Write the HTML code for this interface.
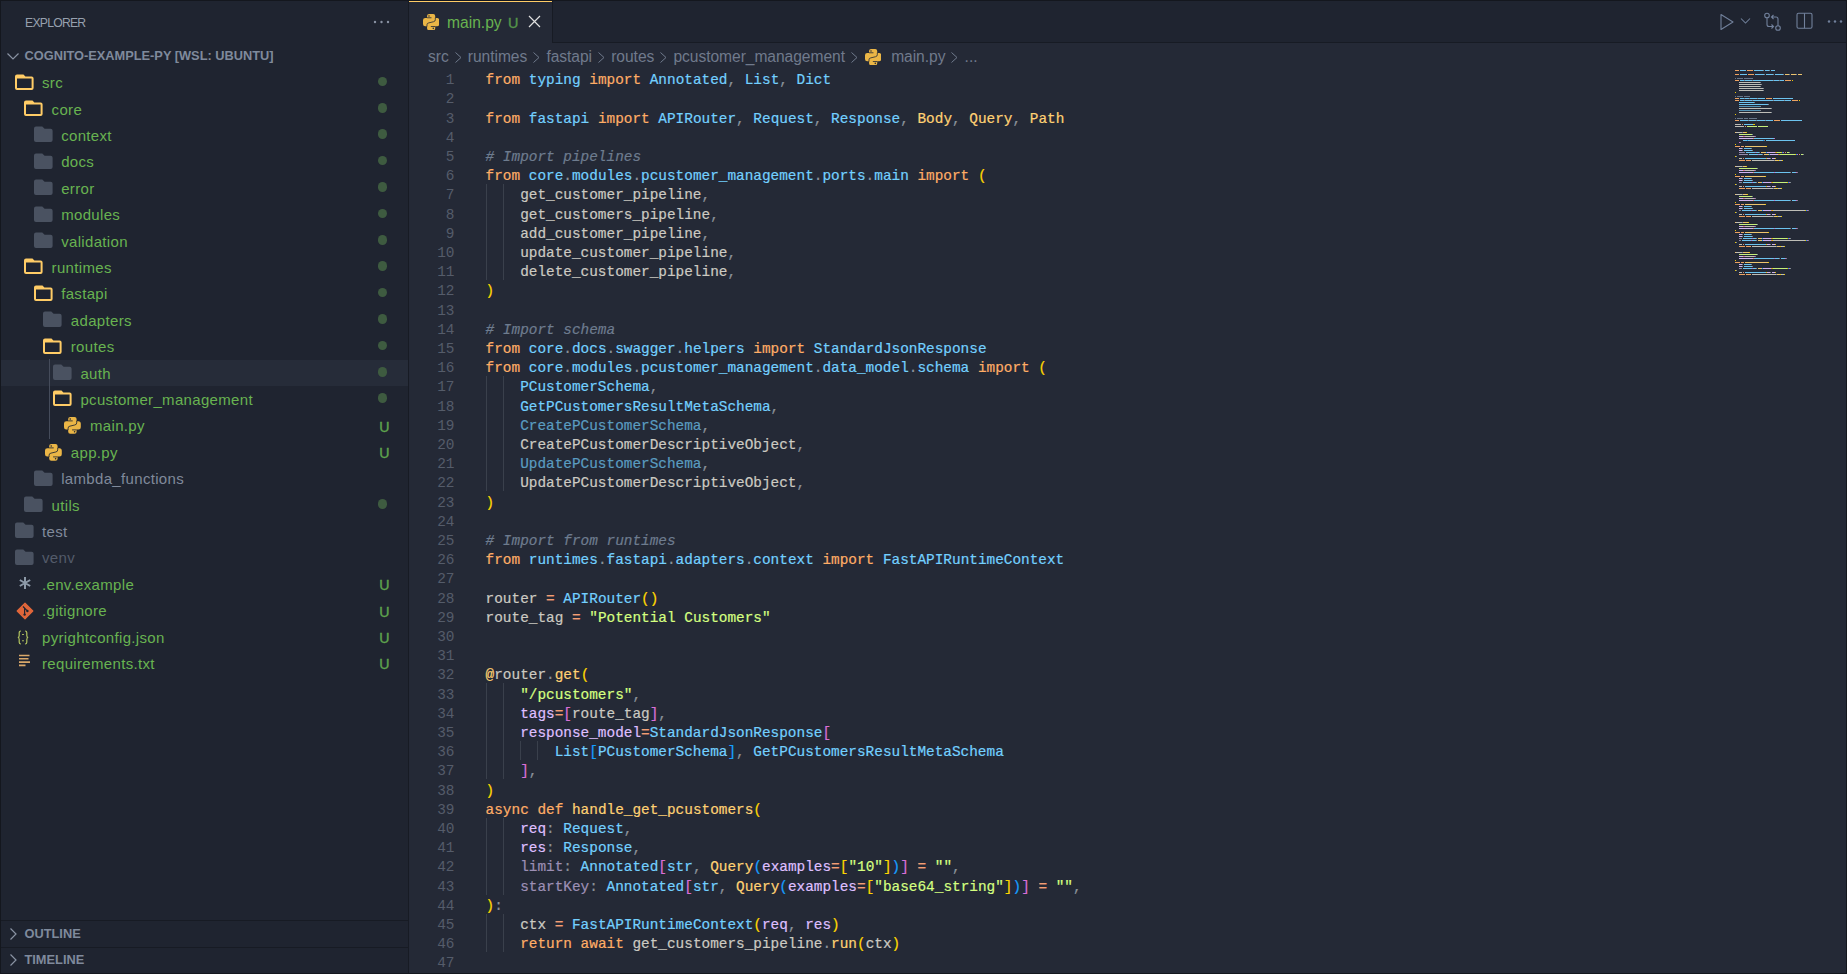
<!DOCTYPE html><html><head><meta charset="utf-8"><style>

*{box-sizing:border-box;margin:0;padding:0}
html,body{width:1847px;height:974px;overflow:hidden;background:#242936}
body{position:relative;font-family:"Liberation Sans",sans-serif}
.a{position:absolute}
#sb{left:0;top:0;width:408px;height:974px;background:#1f2430}
#sbb{left:408px;top:0;width:1px;height:974px;background:#171b24}
.ttl{left:25px;top:14px;font-size:12.2px;letter-spacing:-0.75px;color:#97a0ae;line-height:18px}
.row{left:0;width:408px;height:26.4px}
.nm{position:absolute;font-size:15px;letter-spacing:0.33px;line-height:26.4px;top:0.9px;white-space:pre}
.dt{position:absolute;left:377.8px;width:9.6px;height:9.6px;border-radius:50%;background:#3e5b40;top:7.2px}
.U{position:absolute;left:379.2px;top:1.2px;font-size:14.2px;-webkit-text-stroke:0.35px #5fa64e;line-height:26.4px;color:#5fa64e}
.ic{position:absolute;top:0}
.hdr{font-weight:bold;font-size:12.8px;letter-spacing:0px;color:#7f8a9c;white-space:pre}
.code{left:485.6px;-webkit-text-stroke:0.2px currentColor;font-family:"Liberation Mono",monospace;font-size:14.4px;line-height:19.2px;height:19.2px;white-space:pre;color:#cccac2}
.ln{left:420px;width:34.5px;text-align:right;font-family:"Liberation Mono",monospace;font-size:14.4px;line-height:19.2px;height:19.2px;color:#555c6a}
.ig{width:1px;background:#3a404c}
.k{color:#ffad66}.n{color:#73d0ff}.c{color:#73d0ff}.f{color:#ffd173}.v{color:#cccac2}.p{color:#dfbfff}.pu{color:#9d8fb5}
.u{color:#5a9cc0}.o{color:#f29e74}.d{color:#8a9199}.s{color:#d5ff80}.cm{color:#6e7c8f;font-style:italic}
.b1{color:#ffd700}.b2{color:#da70d6}.b3{color:#179fff}.dc{color:#ffd173}
.bc{top:43.5px;left:428px;letter-spacing:-0.05px;height:26.4px;line-height:26.4px;font-size:15.6px;color:#707a8c;white-space:pre;display:flex;align-items:center}
.chev{display:inline-block;width:19.2px;height:26.4px;position:relative}
.mm{height:1.15px;opacity:.92}

</style></head><body>
<div class="a" id="sb"></div>
<div class="a" id="sbb"></div>
<div class="a ttl">EXPLORER</div>
<svg class="a" style="left:372px;top:16.8px" width="20" height="10" viewBox="0 0 20 10"><circle cx="3" cy="5" r="1.2" fill="#8a93a3"/><circle cx="9.5" cy="5" r="1.2" fill="#8a93a3"/><circle cx="16" cy="5" r="1.2" fill="#8a93a3"/></svg>
<svg class="a" style="left:6px;top:49px" width="14" height="14" viewBox="0 0 14 14"><path d="M1.5 4.5 L7 10 L12.5 4.5" fill="none" stroke="#8a93a3" stroke-width="1.2"/></svg>
<div class="a hdr" style="left:24.5px;top:42.6px;line-height:26.4px">COGNITO-EXAMPLE-PY [WSL: UBUNTU]</div>
<svg class="a" style="left:13.6px;top:73.6px" width="20" height="17" viewBox="0 0 20 17"><path d="M1 2.4 Q1 0.4 3 0.4 H9.5 L11.4 2.4 H17.6 Q19.6 2.4 19.6 4.4 V14 Q19.6 16 17.6 16 H3 Q1 16 1 14 Z M3 4.6 V14 H17.6 V4.6 Z" fill="#ffcc66" fill-rule="evenodd"/></svg>
<div class="a row" style="top:69.4px"><span class="nm" style="left:42.0px;color:#68b350">src</span>
<span class="dt"></span>
</div>
<svg class="a" style="left:23.2px;top:100.0px" width="20" height="17" viewBox="0 0 20 17"><path d="M1 2.4 Q1 0.4 3 0.4 H9.5 L11.4 2.4 H17.6 Q19.6 2.4 19.6 4.4 V14 Q19.6 16 17.6 16 H3 Q1 16 1 14 Z M3 4.6 V14 H17.6 V4.6 Z" fill="#ffcc66" fill-rule="evenodd"/></svg>
<div class="a row" style="top:95.8px"><span class="nm" style="left:51.6px;color:#68b350">core</span>
<span class="dt"></span>
</div>
<svg class="a" style="left:32.8px;top:126.4px" width="20" height="17" viewBox="0 0 20 17"><path d="M1 2.4 Q1 0.4 3 0.4 H9.3 L11.6 2.8 H17.6 Q19.6 2.8 19.6 4.8 V14 Q19.6 16 17.6 16 H3 Q1 16 1 14 Z" fill="#4a5261"/></svg>
<div class="a row" style="top:122.2px"><span class="nm" style="left:61.2px;color:#68b350">context</span>
<span class="dt"></span>
</div>
<svg class="a" style="left:32.8px;top:152.8px" width="20" height="17" viewBox="0 0 20 17"><path d="M1 2.4 Q1 0.4 3 0.4 H9.3 L11.6 2.8 H17.6 Q19.6 2.8 19.6 4.8 V14 Q19.6 16 17.6 16 H3 Q1 16 1 14 Z" fill="#4a5261"/></svg>
<div class="a row" style="top:148.6px"><span class="nm" style="left:61.2px;color:#68b350">docs</span>
<span class="dt"></span>
</div>
<svg class="a" style="left:32.8px;top:179.2px" width="20" height="17" viewBox="0 0 20 17"><path d="M1 2.4 Q1 0.4 3 0.4 H9.3 L11.6 2.8 H17.6 Q19.6 2.8 19.6 4.8 V14 Q19.6 16 17.6 16 H3 Q1 16 1 14 Z" fill="#4a5261"/></svg>
<div class="a row" style="top:175.0px"><span class="nm" style="left:61.2px;color:#68b350">error</span>
<span class="dt"></span>
</div>
<svg class="a" style="left:32.8px;top:205.6px" width="20" height="17" viewBox="0 0 20 17"><path d="M1 2.4 Q1 0.4 3 0.4 H9.3 L11.6 2.8 H17.6 Q19.6 2.8 19.6 4.8 V14 Q19.6 16 17.6 16 H3 Q1 16 1 14 Z" fill="#4a5261"/></svg>
<div class="a row" style="top:201.4px"><span class="nm" style="left:61.2px;color:#68b350">modules</span>
<span class="dt"></span>
</div>
<svg class="a" style="left:32.8px;top:232.0px" width="20" height="17" viewBox="0 0 20 17"><path d="M1 2.4 Q1 0.4 3 0.4 H9.3 L11.6 2.8 H17.6 Q19.6 2.8 19.6 4.8 V14 Q19.6 16 17.6 16 H3 Q1 16 1 14 Z" fill="#4a5261"/></svg>
<div class="a row" style="top:227.8px"><span class="nm" style="left:61.2px;color:#68b350">validation</span>
<span class="dt"></span>
</div>
<svg class="a" style="left:23.2px;top:258.4px" width="20" height="17" viewBox="0 0 20 17"><path d="M1 2.4 Q1 0.4 3 0.4 H9.5 L11.4 2.4 H17.6 Q19.6 2.4 19.6 4.4 V14 Q19.6 16 17.6 16 H3 Q1 16 1 14 Z M3 4.6 V14 H17.6 V4.6 Z" fill="#ffcc66" fill-rule="evenodd"/></svg>
<div class="a row" style="top:254.2px"><span class="nm" style="left:51.6px;color:#68b350">runtimes</span>
<span class="dt"></span>
</div>
<svg class="a" style="left:32.8px;top:284.8px" width="20" height="17" viewBox="0 0 20 17"><path d="M1 2.4 Q1 0.4 3 0.4 H9.5 L11.4 2.4 H17.6 Q19.6 2.4 19.6 4.4 V14 Q19.6 16 17.6 16 H3 Q1 16 1 14 Z M3 4.6 V14 H17.6 V4.6 Z" fill="#ffcc66" fill-rule="evenodd"/></svg>
<div class="a row" style="top:280.6px"><span class="nm" style="left:61.2px;color:#68b350">fastapi</span>
<span class="dt"></span>
</div>
<svg class="a" style="left:42.4px;top:311.2px" width="20" height="17" viewBox="0 0 20 17"><path d="M1 2.4 Q1 0.4 3 0.4 H9.3 L11.6 2.8 H17.6 Q19.6 2.8 19.6 4.8 V14 Q19.6 16 17.6 16 H3 Q1 16 1 14 Z" fill="#4a5261"/></svg>
<div class="a row" style="top:307.0px"><span class="nm" style="left:70.8px;color:#68b350">adapters</span>
<span class="dt"></span>
</div>
<svg class="a" style="left:42.4px;top:337.6px" width="20" height="17" viewBox="0 0 20 17"><path d="M1 2.4 Q1 0.4 3 0.4 H9.5 L11.4 2.4 H17.6 Q19.6 2.4 19.6 4.4 V14 Q19.6 16 17.6 16 H3 Q1 16 1 14 Z M3 4.6 V14 H17.6 V4.6 Z" fill="#ffcc66" fill-rule="evenodd"/></svg>
<div class="a row" style="top:333.4px"><span class="nm" style="left:70.8px;color:#68b350">routes</span>
<span class="dt"></span>
</div>
<div class="a" style="left:1px;top:359.8px;width:407px;height:26.4px;background:#262c39"></div>
<svg class="a" style="left:52.0px;top:364.0px" width="20" height="17" viewBox="0 0 20 17"><path d="M1 2.4 Q1 0.4 3 0.4 H9.3 L11.6 2.8 H17.6 Q19.6 2.8 19.6 4.8 V14 Q19.6 16 17.6 16 H3 Q1 16 1 14 Z" fill="#4a5261"/></svg>
<div class="a row" style="top:359.8px"><span class="nm" style="left:80.4px;color:#68b350">auth</span>
<span class="dt"></span>
</div>
<svg class="a" style="left:52.0px;top:390.4px" width="20" height="17" viewBox="0 0 20 17"><path d="M1 2.4 Q1 0.4 3 0.4 H9.5 L11.4 2.4 H17.6 Q19.6 2.4 19.6 4.4 V14 Q19.6 16 17.6 16 H3 Q1 16 1 14 Z M3 4.6 V14 H17.6 V4.6 Z" fill="#ffcc66" fill-rule="evenodd"/></svg>
<div class="a row" style="top:386.2px"><span class="nm" style="left:80.4px;color:#68b350">pcustomer_management</span>
<span class="dt"></span>
</div>
<svg class="a" style="left:64.2px;top:417.4px" width="16.8" height="16.8" viewBox="0 0 16 16"><path d="M6 0 H10 Q12 0 12 2 V4 H13.8 Q16 4 16 6.5 V9.8 Q16 12 13.8 12 H12 V14 Q12 16 10 16 H6 Q4 16 4 14 V12 H2.2 Q0 12 0 9.8 V6.2 Q0 4 2.2 4 H4 V2 Q4 0 6 0 Z" fill="#ebb646"/><path d="M3.9 12.3 V10.6 Q3.9 8.9 5.7 8.7 L10.3 7.6 Q12.1 7.3 12.1 5.6 V3.7 M4 3.7 H8.3 M7.7 12.3 H12" fill="none" stroke="#1f2430" stroke-width="0.8"/><circle cx="5.9" cy="1.9" r="0.75" fill="#1f2430"/><circle cx="10.1" cy="14.1" r="0.75" fill="#1f2430"/></svg>
<div class="a row" style="top:412.6px"><span class="nm" style="left:90.0px;color:#68b350">main.py</span>
<span class="U">U</span>
</div>
<svg class="a" style="left:45.0px;top:443.8px" width="16.8" height="16.8" viewBox="0 0 16 16"><path d="M6 0 H10 Q12 0 12 2 V4 H13.8 Q16 4 16 6.5 V9.8 Q16 12 13.8 12 H12 V14 Q12 16 10 16 H6 Q4 16 4 14 V12 H2.2 Q0 12 0 9.8 V6.2 Q0 4 2.2 4 H4 V2 Q4 0 6 0 Z" fill="#ebb646"/><path d="M3.9 12.3 V10.6 Q3.9 8.9 5.7 8.7 L10.3 7.6 Q12.1 7.3 12.1 5.6 V3.7 M4 3.7 H8.3 M7.7 12.3 H12" fill="none" stroke="#1f2430" stroke-width="0.8"/><circle cx="5.9" cy="1.9" r="0.75" fill="#1f2430"/><circle cx="10.1" cy="14.1" r="0.75" fill="#1f2430"/></svg>
<div class="a row" style="top:439.0px"><span class="nm" style="left:70.8px;color:#68b350">app.py</span>
<span class="U">U</span>
</div>
<svg class="a" style="left:32.8px;top:469.6px" width="20" height="17" viewBox="0 0 20 17"><path d="M1 2.4 Q1 0.4 3 0.4 H9.3 L11.6 2.8 H17.6 Q19.6 2.8 19.6 4.8 V14 Q19.6 16 17.6 16 H3 Q1 16 1 14 Z" fill="#4a5261"/></svg>
<div class="a row" style="top:465.4px"><span class="nm" style="left:61.2px;color:#808a9b">lambda_functions</span>
</div>
<svg class="a" style="left:23.2px;top:496.0px" width="20" height="17" viewBox="0 0 20 17"><path d="M1 2.4 Q1 0.4 3 0.4 H9.3 L11.6 2.8 H17.6 Q19.6 2.8 19.6 4.8 V14 Q19.6 16 17.6 16 H3 Q1 16 1 14 Z" fill="#4a5261"/></svg>
<div class="a row" style="top:491.8px"><span class="nm" style="left:51.6px;color:#68b350">utils</span>
<span class="dt"></span>
</div>
<svg class="a" style="left:13.6px;top:522.4px" width="20" height="17" viewBox="0 0 20 17"><path d="M1 2.4 Q1 0.4 3 0.4 H9.3 L11.6 2.8 H17.6 Q19.6 2.8 19.6 4.8 V14 Q19.6 16 17.6 16 H3 Q1 16 1 14 Z" fill="#4a5261"/></svg>
<div class="a row" style="top:518.2px"><span class="nm" style="left:42.0px;color:#808a9b">test</span>
</div>
<svg class="a" style="left:13.6px;top:548.8px" width="20" height="17" viewBox="0 0 20 17"><path d="M1 2.4 Q1 0.4 3 0.4 H9.3 L11.6 2.8 H17.6 Q19.6 2.8 19.6 4.8 V14 Q19.6 16 17.6 16 H3 Q1 16 1 14 Z" fill="#4a5261"/></svg>
<div class="a row" style="top:544.6px"><span class="nm" style="left:42.0px;color:#535b6a">venv</span>
</div>
<svg class="a" style="left:17.6px;top:576.0px" width="14" height="14" viewBox="0 0 14 14"><path d="M7 1 V13 M1.8 4 L12.2 10 M1.8 10 L12.2 4" stroke="#8d9aa8" stroke-width="2"/></svg>
<div class="a row" style="top:571.0px"><span class="nm" style="left:42.0px;color:#68b350">.env.example</span>
<span class="U">U</span>
</div>
<svg class="a" style="left:15.8px;top:601.8px" width="18" height="18" viewBox="0 0 18 18"><path d="M9 1.2 L16.8 9 L9 16.8 L1.2 9 Z" fill="#e0663a" stroke="#e0663a" stroke-width="1.2" stroke-linejoin="round"/><path d="M7 4.5 L11.3 8.8 M8.6 6.1 V12.5" stroke="#1f2430" stroke-width="1.2" fill="none"/><circle cx="8.6" cy="12.6" r="1.2" fill="#1f2430"/><circle cx="11.4" cy="9" r="1.2" fill="#1f2430"/></svg>
<div class="a row" style="top:597.4px"><span class="nm" style="left:42.0px;color:#68b350">.gitignore</span>
<span class="U">U</span>
</div>
<svg class="a" style="left:17.2px;top:630.2px" width="12" height="15" viewBox="0 0 12 15"><path d="M4 1 Q2.2 1 2.2 2.8 V5.6 Q2.2 7.5 0.8 7.5 Q2.2 7.5 2.2 9.4 V12.2 Q2.2 14 4 14 M8 1 Q9.8 1 9.8 2.8 V5.6 Q9.8 7.5 11.2 7.5 Q9.8 7.5 9.8 9.4 V12.2 Q9.8 14 8 14" fill="none" stroke="#b2c460" stroke-width="1.2"/><path d="M5 4.5 H7 M5 10.5 Q6 11.6 7 10.5" fill="none" stroke="#b2c460" stroke-width="0.9"/></svg>
<div class="a row" style="top:623.8px"><span class="nm" style="left:42.0px;color:#68b350">pyrightconfig.json</span>
<span class="U">U</span>
</div>
<svg class="a" style="left:17.8px;top:654.4px" width="14" height="14" viewBox="0 0 14 14"><path d="M1 1.5 H11.5 M1 4.8 H10.5 M1 8.1 H12 M1 11.4 H7.5" stroke="#d9a86a" stroke-width="1.6"/></svg>
<div class="a row" style="top:650.2px"><span class="nm" style="left:42.0px;color:#68b350">requirements.txt</span>
<span class="U">U</span>
</div>
<div class="a" style="left:49px;top:359.2px;width:1px;height:79.4px;background:#454c5b"></div>
<div class="a" style="left:1px;top:920px;width:407px;height:1px;background:#171b24"></div>
<div class="a" style="left:1px;top:946.6px;width:407px;height:1px;background:#171b24"></div>
<svg class="a" style="left:6px;top:926.6px" width="14" height="14" viewBox="0 0 14 14"><path d="M4.5 1.5 L10 7 L4.5 12.5" fill="none" stroke="#8a93a3" stroke-width="1.2"/></svg>
<div class="a hdr" style="left:24.5px;top:920.6px;line-height:26.4px">OUTLINE</div>
<svg class="a" style="left:6px;top:953.0px" width="14" height="14" viewBox="0 0 14 14"><path d="M4.5 1.5 L10 7 L4.5 12.5" fill="none" stroke="#8a93a3" stroke-width="1.2"/></svg>
<div class="a hdr" style="left:24.5px;top:947.0px;line-height:26.4px">TIMELINE</div>
<div class="a" style="left:409px;top:0;width:1438px;height:42px;background:#1f2430"></div>
<div class="a" style="left:552px;top:41.5px;width:1295px;height:1px;background:#171b24"></div>
<div class="a" style="left:409px;top:1px;width:143px;height:41.5px;background:#242936"></div>
<div class="a" style="left:409px;top:1px;width:143px;height:1.2px;background:#ffcc66"></div>
<div class="a" style="left:552px;top:1px;width:1px;height:41px;background:#171b24"></div>
<svg class="a" style="left:422.8px;top:13.7px" width="16.3" height="16.3" viewBox="0 0 16 16"><path d="M6 0 H10 Q12 0 12 2 V4 H13.8 Q16 4 16 6.5 V9.8 Q16 12 13.8 12 H12 V14 Q12 16 10 16 H6 Q4 16 4 14 V12 H2.2 Q0 12 0 9.8 V6.2 Q0 4 2.2 4 H4 V2 Q4 0 6 0 Z" fill="#ebb646"/><path d="M3.9 12.3 V10.6 Q3.9 8.9 5.7 8.7 L10.3 7.6 Q12.1 7.3 12.1 5.6 V3.7 M4 3.7 H8.3 M7.7 12.3 H12" fill="none" stroke="#242936" stroke-width="0.8"/><circle cx="5.9" cy="1.9" r="0.75" fill="#242936"/><circle cx="10.1" cy="14.1" r="0.75" fill="#242936"/></svg>
<div class="a" style="left:447px;top:10px;font-size:15.6px;line-height:26px;color:#68b350">main.py</div>
<div class="a" style="left:508px;top:10.2px;font-size:14.4px;-webkit-text-stroke:0.35px #55964a;line-height:26px;color:#55964a">U</div>
<svg class="a" style="left:528px;top:15px" width="13" height="13" viewBox="0 0 13 13"><path d="M1 1 L12 12 M12 1 L1 12" stroke="#e0e0e0" stroke-width="1.2"/></svg>
<svg class="a" style="left:1718px;top:12px" width="18" height="20" viewBox="0 0 18 20"><path d="M3 2.5 L15 10 L3 17.5 Z" fill="none" stroke="#71809b" stroke-width="1.1" stroke-linejoin="round"/></svg>
<svg class="a" style="left:1740px;top:17px" width="12" height="9" viewBox="0 0 12 9"><path d="M1 1.5 L5.5 6 L10 1.5" fill="none" stroke="#71809b" stroke-width="1.05"/></svg>
<svg class="a" style="left:1763px;top:12px" width="20" height="20" viewBox="0 0 20 20"><circle cx="4" cy="3.5" r="2.3" fill="none" stroke="#71809b" stroke-width="1.1"/><circle cx="15" cy="16" r="2.3" fill="none" stroke="#71809b" stroke-width="1.1"/><path d="M4 5.8 V12.5 Q4 14.5 6 14.5 H10.5 M8.5 12.5 L10.5 14.5 L8.5 16.5 M15 13.7 V7 Q15 5 13 5 H8.5 M10.5 3 L8.5 5 L10.5 7" fill="none" stroke="#71809b" stroke-width="1.1"/></svg>
<svg class="a" style="left:1796px;top:12px" width="18" height="18" viewBox="0 0 18 18"><rect x="1" y="1.2" width="15" height="15" rx="1.5" fill="none" stroke="#71809b" stroke-width="1.1"/><path d="M8.5 1.2 V16.2" stroke="#71809b" stroke-width="1.1"/></svg>
<svg class="a" style="left:1826px;top:16px" width="20" height="10" viewBox="0 0 20 10"><circle cx="3" cy="5.5" r="1.2" fill="#71809b"/><circle cx="9" cy="5.5" r="1.2" fill="#71809b"/><circle cx="15" cy="5.5" r="1.2" fill="#71809b"/></svg>
<div class="a bc"><span>src</span><span class="chev"><svg style="position:absolute;left:5px;top:8px" width="9" height="11" viewBox="0 0 9 11"><path d="M1.5 0.5 L7 5.5 L1.5 10.5" fill="none" stroke="#707a8c" stroke-width="1"/></svg></span><span>runtimes</span><span class="chev"><svg style="position:absolute;left:5px;top:8px" width="9" height="11" viewBox="0 0 9 11"><path d="M1.5 0.5 L7 5.5 L1.5 10.5" fill="none" stroke="#707a8c" stroke-width="1"/></svg></span><span>fastapi</span><span class="chev"><svg style="position:absolute;left:5px;top:8px" width="9" height="11" viewBox="0 0 9 11"><path d="M1.5 0.5 L7 5.5 L1.5 10.5" fill="none" stroke="#707a8c" stroke-width="1"/></svg></span><span>routes</span><span class="chev"><svg style="position:absolute;left:5px;top:8px" width="9" height="11" viewBox="0 0 9 11"><path d="M1.5 0.5 L7 5.5 L1.5 10.5" fill="none" stroke="#707a8c" stroke-width="1"/></svg></span><span>pcustomer_management</span><span class="chev"><svg style="position:absolute;left:5px;top:8px" width="9" height="11" viewBox="0 0 9 11"><path d="M1.5 0.5 L7 5.5 L1.5 10.5" fill="none" stroke="#707a8c" stroke-width="1"/></svg></span><span style="display:inline-block;width:27px;height:26.4px;position:relative"><svg class="a" style="position:absolute;left:0.5px;top:5.2px" width="16.3" height="16.3" viewBox="0 0 16 16"><path d="M6 0 H10 Q12 0 12 2 V4 H13.8 Q16 4 16 6.5 V9.8 Q16 12 13.8 12 H12 V14 Q12 16 10 16 H6 Q4 16 4 14 V12 H2.2 Q0 12 0 9.8 V6.2 Q0 4 2.2 4 H4 V2 Q4 0 6 0 Z" fill="#ebb646"/><path d="M3.9 12.3 V10.6 Q3.9 8.9 5.7 8.7 L10.3 7.6 Q12.1 7.3 12.1 5.6 V3.7 M4 3.7 H8.3 M7.7 12.3 H12" fill="none" stroke="#242936" stroke-width="0.8"/><circle cx="5.9" cy="1.9" r="0.75" fill="#242936"/><circle cx="10.1" cy="14.1" r="0.75" fill="#242936"/></svg></span><span>main.py</span><span class="chev"><svg style="position:absolute;left:5px;top:8px" width="9" height="11" viewBox="0 0 9 11"><path d="M1.5 0.5 L7 5.5 L1.5 10.5" fill="none" stroke="#707a8c" stroke-width="1"/></svg></span><span>...</span></div>
<div class="a ln" style="top:71.20px">1</div>
<div class="a code" style="top:71.20px"><span class="k">from</span> <span class="n">typing</span> <span class="k">import</span> <span class="c">Annotated</span><span class="d">,</span> <span class="c">List</span><span class="d">,</span> <span class="c">Dict</span></div>
<div class="a ln" style="top:90.40px">2</div>
<div class="a ln" style="top:109.60px">3</div>
<div class="a code" style="top:109.60px"><span class="k">from</span> <span class="n">fastapi</span> <span class="k">import</span> <span class="c">APIRouter</span><span class="d">,</span> <span class="c">Request</span><span class="d">,</span> <span class="c">Response</span><span class="d">,</span> <span class="f">Body</span><span class="d">,</span> <span class="f">Query</span><span class="d">,</span> <span class="f">Path</span></div>
<div class="a ln" style="top:128.80px">4</div>
<div class="a ln" style="top:148.00px">5</div>
<div class="a code" style="top:148.00px"><span class="cm"># Import pipelines</span></div>
<div class="a ln" style="top:167.20px">6</div>
<div class="a code" style="top:167.20px"><span class="k">from</span> <span class="n">core</span><span class="d">.</span><span class="n">modules</span><span class="d">.</span><span class="n">pcustomer_management</span><span class="d">.</span><span class="n">ports</span><span class="d">.</span><span class="n">main</span> <span class="k">import</span> <span class="b1">(</span></div>
<div class="a ln" style="top:186.40px">7</div>
<div class="a code" style="top:186.40px">    <span class="v">get_customer_pipeline</span><span class="d">,</span></div>
<div class="a ig" style="left:485.6px;top:184.20px;height:19.20px"></div>
<div class="a ig" style="left:502.9px;top:184.20px;height:19.20px"></div>
<div class="a ln" style="top:205.60px">8</div>
<div class="a code" style="top:205.60px">    <span class="v">get_customers_pipeline</span><span class="d">,</span></div>
<div class="a ig" style="left:485.6px;top:203.40px;height:19.20px"></div>
<div class="a ig" style="left:502.9px;top:203.40px;height:19.20px"></div>
<div class="a ln" style="top:224.80px">9</div>
<div class="a code" style="top:224.80px">    <span class="v">add_customer_pipeline</span><span class="d">,</span></div>
<div class="a ig" style="left:485.6px;top:222.60px;height:19.20px"></div>
<div class="a ig" style="left:502.9px;top:222.60px;height:19.20px"></div>
<div class="a ln" style="top:244.00px">10</div>
<div class="a code" style="top:244.00px">    <span class="v">update_customer_pipeline</span><span class="d">,</span></div>
<div class="a ig" style="left:485.6px;top:241.80px;height:19.20px"></div>
<div class="a ig" style="left:502.9px;top:241.80px;height:19.20px"></div>
<div class="a ln" style="top:263.20px">11</div>
<div class="a code" style="top:263.20px">    <span class="v">delete_customer_pipeline</span><span class="d">,</span></div>
<div class="a ig" style="left:485.6px;top:261.00px;height:19.20px"></div>
<div class="a ig" style="left:502.9px;top:261.00px;height:19.20px"></div>
<div class="a ln" style="top:282.40px">12</div>
<div class="a code" style="top:282.40px"><span class="b1">)</span></div>
<div class="a ln" style="top:301.60px">13</div>
<div class="a ln" style="top:320.80px">14</div>
<div class="a code" style="top:320.80px"><span class="cm"># Import schema</span></div>
<div class="a ln" style="top:340.00px">15</div>
<div class="a code" style="top:340.00px"><span class="k">from</span> <span class="n">core</span><span class="d">.</span><span class="n">docs</span><span class="d">.</span><span class="n">swagger</span><span class="d">.</span><span class="n">helpers</span> <span class="k">import</span> <span class="c">StandardJsonResponse</span></div>
<div class="a ln" style="top:359.20px">16</div>
<div class="a code" style="top:359.20px"><span class="k">from</span> <span class="n">core</span><span class="d">.</span><span class="n">modules</span><span class="d">.</span><span class="n">pcustomer_management</span><span class="d">.</span><span class="n">data_model</span><span class="d">.</span><span class="n">schema</span> <span class="k">import</span> <span class="b1">(</span></div>
<div class="a ln" style="top:378.40px">17</div>
<div class="a code" style="top:378.40px">    <span class="c">PCustomerSchema</span><span class="d">,</span></div>
<div class="a ig" style="left:485.6px;top:376.20px;height:19.20px"></div>
<div class="a ig" style="left:502.9px;top:376.20px;height:19.20px"></div>
<div class="a ln" style="top:397.60px">18</div>
<div class="a code" style="top:397.60px">    <span class="c">GetPCustomersResultMetaSchema</span><span class="d">,</span></div>
<div class="a ig" style="left:485.6px;top:395.40px;height:19.20px"></div>
<div class="a ig" style="left:502.9px;top:395.40px;height:19.20px"></div>
<div class="a ln" style="top:416.80px">19</div>
<div class="a code" style="top:416.80px">    <span class="u">CreatePCustomerSchema</span><span class="d">,</span></div>
<div class="a ig" style="left:485.6px;top:414.60px;height:19.20px"></div>
<div class="a ig" style="left:502.9px;top:414.60px;height:19.20px"></div>
<div class="a ln" style="top:436.00px">20</div>
<div class="a code" style="top:436.00px">    <span class="v">CreatePCustomerDescriptiveObject</span><span class="d">,</span></div>
<div class="a ig" style="left:485.6px;top:433.80px;height:19.20px"></div>
<div class="a ig" style="left:502.9px;top:433.80px;height:19.20px"></div>
<div class="a ln" style="top:455.20px">21</div>
<div class="a code" style="top:455.20px">    <span class="u">UpdatePCustomerSchema</span><span class="d">,</span></div>
<div class="a ig" style="left:485.6px;top:453.00px;height:19.20px"></div>
<div class="a ig" style="left:502.9px;top:453.00px;height:19.20px"></div>
<div class="a ln" style="top:474.40px">22</div>
<div class="a code" style="top:474.40px">    <span class="v">UpdatePCustomerDescriptiveObject</span><span class="d">,</span></div>
<div class="a ig" style="left:485.6px;top:472.20px;height:19.20px"></div>
<div class="a ig" style="left:502.9px;top:472.20px;height:19.20px"></div>
<div class="a ln" style="top:493.60px">23</div>
<div class="a code" style="top:493.60px"><span class="b1">)</span></div>
<div class="a ln" style="top:512.80px">24</div>
<div class="a ln" style="top:532.00px">25</div>
<div class="a code" style="top:532.00px"><span class="cm"># Import from runtimes</span></div>
<div class="a ln" style="top:551.20px">26</div>
<div class="a code" style="top:551.20px"><span class="k">from</span> <span class="n">runtimes</span><span class="d">.</span><span class="n">fastapi</span><span class="d">.</span><span class="n">adapters</span><span class="d">.</span><span class="n">context</span> <span class="k">import</span> <span class="c">FastAPIRuntimeContext</span></div>
<div class="a ln" style="top:570.40px">27</div>
<div class="a ln" style="top:589.60px">28</div>
<div class="a code" style="top:589.60px"><span class="v">router</span> <span class="o">=</span> <span class="c">APIRouter</span><span class="b1">()</span></div>
<div class="a ln" style="top:608.80px">29</div>
<div class="a code" style="top:608.80px"><span class="v">route_tag</span> <span class="o">=</span> <span class="s">&quot;Potential Customers&quot;</span></div>
<div class="a ln" style="top:628.00px">30</div>
<div class="a ln" style="top:647.20px">31</div>
<div class="a ln" style="top:666.40px">32</div>
<div class="a code" style="top:666.40px"><span class="dc">@</span><span class="v">router</span><span class="d">.</span><span class="f">get</span><span class="b1">(</span></div>
<div class="a ln" style="top:685.60px">33</div>
<div class="a code" style="top:685.60px">    <span class="s">&quot;/pcustomers&quot;</span><span class="d">,</span></div>
<div class="a ig" style="left:485.6px;top:683.40px;height:19.20px"></div>
<div class="a ig" style="left:502.9px;top:683.40px;height:19.20px"></div>
<div class="a ln" style="top:704.80px">34</div>
<div class="a code" style="top:704.80px">    <span class="p">tags</span><span class="o">=</span><span class="b2">[</span><span class="v">route_tag</span><span class="b2">]</span><span class="d">,</span></div>
<div class="a ig" style="left:485.6px;top:702.60px;height:19.20px"></div>
<div class="a ig" style="left:502.9px;top:702.60px;height:19.20px"></div>
<div class="a ln" style="top:724.00px">35</div>
<div class="a code" style="top:724.00px">    <span class="p">response_model</span><span class="o">=</span><span class="c">StandardJsonResponse</span><span class="b2">[</span></div>
<div class="a ig" style="left:485.6px;top:721.80px;height:19.20px"></div>
<div class="a ig" style="left:502.9px;top:721.80px;height:19.20px"></div>
<div class="a ln" style="top:743.20px">36</div>
<div class="a code" style="top:743.20px">        <span class="c">List</span><span class="b3">[</span><span class="c">PCustomerSchema</span><span class="b3">]</span><span class="d">,</span> <span class="c">GetPCustomersResultMetaSchema</span></div>
<div class="a ig" style="left:485.6px;top:741.00px;height:19.20px"></div>
<div class="a ig" style="left:502.9px;top:741.00px;height:19.20px"></div>
<div class="a ig" style="left:520.2px;top:741.00px;height:19.20px"></div>
<div class="a ig" style="left:537.4px;top:741.00px;height:19.20px"></div>
<div class="a ln" style="top:762.40px">37</div>
<div class="a code" style="top:762.40px">    <span class="b2">]</span><span class="d">,</span></div>
<div class="a ig" style="left:485.6px;top:760.20px;height:19.20px"></div>
<div class="a ig" style="left:502.9px;top:760.20px;height:19.20px"></div>
<div class="a ln" style="top:781.60px">38</div>
<div class="a code" style="top:781.60px"><span class="b1">)</span></div>
<div class="a ln" style="top:800.80px">39</div>
<div class="a code" style="top:800.80px"><span class="k">async</span> <span class="k">def</span> <span class="f">handle_get_pcustomers</span><span class="b1">(</span></div>
<div class="a ln" style="top:820.00px">40</div>
<div class="a code" style="top:820.00px">    <span class="p">req</span><span class="d">:</span> <span class="c">Request</span><span class="d">,</span></div>
<div class="a ig" style="left:485.6px;top:817.80px;height:19.20px"></div>
<div class="a ig" style="left:502.9px;top:817.80px;height:19.20px"></div>
<div class="a ln" style="top:839.20px">41</div>
<div class="a code" style="top:839.20px">    <span class="p">res</span><span class="d">:</span> <span class="c">Response</span><span class="d">,</span></div>
<div class="a ig" style="left:485.6px;top:837.00px;height:19.20px"></div>
<div class="a ig" style="left:502.9px;top:837.00px;height:19.20px"></div>
<div class="a ln" style="top:858.40px">42</div>
<div class="a code" style="top:858.40px">    <span class="pu">limit</span><span class="d">:</span> <span class="c">Annotated</span><span class="b2">[</span><span class="c">str</span><span class="d">,</span> <span class="f">Query</span><span class="b3">(</span><span class="p">examples</span><span class="o">=</span><span class="b1">[</span><span class="s">&quot;10&quot;</span><span class="b1">]</span><span class="b3">)</span><span class="b2">]</span> <span class="o">=</span> <span class="s">&quot;&quot;</span><span class="d">,</span></div>
<div class="a ig" style="left:485.6px;top:856.20px;height:19.20px"></div>
<div class="a ig" style="left:502.9px;top:856.20px;height:19.20px"></div>
<div class="a ln" style="top:877.60px">43</div>
<div class="a code" style="top:877.60px">    <span class="pu">startKey</span><span class="d">:</span> <span class="c">Annotated</span><span class="b2">[</span><span class="c">str</span><span class="d">,</span> <span class="f">Query</span><span class="b3">(</span><span class="p">examples</span><span class="o">=</span><span class="b1">[</span><span class="s">&quot;base64_string&quot;</span><span class="b1">]</span><span class="b3">)</span><span class="b2">]</span> <span class="o">=</span> <span class="s">&quot;&quot;</span><span class="d">,</span></div>
<div class="a ig" style="left:485.6px;top:875.40px;height:19.20px"></div>
<div class="a ig" style="left:502.9px;top:875.40px;height:19.20px"></div>
<div class="a ln" style="top:896.80px">44</div>
<div class="a code" style="top:896.80px"><span class="b1">)</span><span class="d">:</span></div>
<div class="a ln" style="top:916.00px">45</div>
<div class="a code" style="top:916.00px">    <span class="v">ctx</span> <span class="o">=</span> <span class="c">FastAPIRuntimeContext</span><span class="b1">(</span><span class="p">req</span><span class="d">,</span> <span class="p">res</span><span class="b1">)</span></div>
<div class="a ig" style="left:485.6px;top:913.80px;height:19.20px"></div>
<div class="a ig" style="left:502.9px;top:913.80px;height:19.20px"></div>
<div class="a ln" style="top:935.20px">46</div>
<div class="a code" style="top:935.20px">    <span class="k">return</span> <span class="k">await</span> <span class="v">get_customers_pipeline</span><span class="d">.</span><span class="f">run</span><span class="b1">(</span><span class="v">ctx</span><span class="b1">)</span></div>
<div class="a ig" style="left:485.6px;top:933.00px;height:19.20px"></div>
<div class="a ig" style="left:502.9px;top:933.00px;height:19.20px"></div>
<div class="a ln" style="top:954.40px">47</div>
<div class="a mm" style="left:1735px;top:70.0px;width:4px;background:#ffad66"></div>
<div class="a mm" style="left:1740px;top:70.0px;width:6px;background:#73d0ff"></div>
<div class="a mm" style="left:1747px;top:70.0px;width:6px;background:#ffad66"></div>
<div class="a mm" style="left:1754px;top:70.0px;width:9px;background:#73d0ff"></div>
<div class="a mm" style="left:1763px;top:70.0px;width:1px;background:#8a9199"></div>
<div class="a mm" style="left:1765px;top:70.0px;width:4px;background:#73d0ff"></div>
<div class="a mm" style="left:1769px;top:70.0px;width:1px;background:#8a9199"></div>
<div class="a mm" style="left:1771px;top:70.0px;width:4px;background:#73d0ff"></div>
<div class="a mm" style="left:1735px;top:74.0px;width:4px;background:#ffad66"></div>
<div class="a mm" style="left:1740px;top:74.0px;width:7px;background:#73d0ff"></div>
<div class="a mm" style="left:1748px;top:74.0px;width:6px;background:#ffad66"></div>
<div class="a mm" style="left:1755px;top:74.0px;width:9px;background:#73d0ff"></div>
<div class="a mm" style="left:1764px;top:74.0px;width:1px;background:#8a9199"></div>
<div class="a mm" style="left:1766px;top:74.0px;width:7px;background:#73d0ff"></div>
<div class="a mm" style="left:1773px;top:74.0px;width:1px;background:#8a9199"></div>
<div class="a mm" style="left:1775px;top:74.0px;width:8px;background:#73d0ff"></div>
<div class="a mm" style="left:1783px;top:74.0px;width:1px;background:#8a9199"></div>
<div class="a mm" style="left:1785px;top:74.0px;width:4px;background:#ffd173"></div>
<div class="a mm" style="left:1789px;top:74.0px;width:1px;background:#8a9199"></div>
<div class="a mm" style="left:1791px;top:74.0px;width:5px;background:#ffd173"></div>
<div class="a mm" style="left:1796px;top:74.0px;width:1px;background:#8a9199"></div>
<div class="a mm" style="left:1798px;top:74.0px;width:4px;background:#ffd173"></div>
<div class="a mm" style="left:1735px;top:78.0px;width:1px;background:#6e7c8f"></div>
<div class="a mm" style="left:1737px;top:78.0px;width:6px;background:#6e7c8f"></div>
<div class="a mm" style="left:1744px;top:78.0px;width:9px;background:#6e7c8f"></div>
<div class="a mm" style="left:1735px;top:80.0px;width:4px;background:#ffad66"></div>
<div class="a mm" style="left:1740px;top:80.0px;width:4px;background:#73d0ff"></div>
<div class="a mm" style="left:1744px;top:80.0px;width:1px;background:#8a9199"></div>
<div class="a mm" style="left:1745px;top:80.0px;width:7px;background:#73d0ff"></div>
<div class="a mm" style="left:1752px;top:80.0px;width:1px;background:#8a9199"></div>
<div class="a mm" style="left:1753px;top:80.0px;width:20px;background:#73d0ff"></div>
<div class="a mm" style="left:1773px;top:80.0px;width:1px;background:#8a9199"></div>
<div class="a mm" style="left:1774px;top:80.0px;width:5px;background:#73d0ff"></div>
<div class="a mm" style="left:1779px;top:80.0px;width:1px;background:#8a9199"></div>
<div class="a mm" style="left:1780px;top:80.0px;width:4px;background:#73d0ff"></div>
<div class="a mm" style="left:1785px;top:80.0px;width:6px;background:#ffad66"></div>
<div class="a mm" style="left:1792px;top:80.0px;width:1px;background:#ffd700"></div>
<div class="a mm" style="left:1739px;top:82.0px;width:21px;background:#cccac2"></div>
<div class="a mm" style="left:1760px;top:82.0px;width:1px;background:#8a9199"></div>
<div class="a mm" style="left:1739px;top:84.0px;width:22px;background:#cccac2"></div>
<div class="a mm" style="left:1761px;top:84.0px;width:1px;background:#8a9199"></div>
<div class="a mm" style="left:1739px;top:86.0px;width:21px;background:#cccac2"></div>
<div class="a mm" style="left:1760px;top:86.0px;width:1px;background:#8a9199"></div>
<div class="a mm" style="left:1739px;top:88.0px;width:24px;background:#cccac2"></div>
<div class="a mm" style="left:1763px;top:88.0px;width:1px;background:#8a9199"></div>
<div class="a mm" style="left:1739px;top:90.0px;width:24px;background:#cccac2"></div>
<div class="a mm" style="left:1763px;top:90.0px;width:1px;background:#8a9199"></div>
<div class="a mm" style="left:1735px;top:92.0px;width:1px;background:#ffd700"></div>
<div class="a mm" style="left:1735px;top:96.0px;width:1px;background:#6e7c8f"></div>
<div class="a mm" style="left:1737px;top:96.0px;width:6px;background:#6e7c8f"></div>
<div class="a mm" style="left:1744px;top:96.0px;width:6px;background:#6e7c8f"></div>
<div class="a mm" style="left:1735px;top:98.0px;width:4px;background:#ffad66"></div>
<div class="a mm" style="left:1740px;top:98.0px;width:4px;background:#73d0ff"></div>
<div class="a mm" style="left:1744px;top:98.0px;width:1px;background:#8a9199"></div>
<div class="a mm" style="left:1745px;top:98.0px;width:4px;background:#73d0ff"></div>
<div class="a mm" style="left:1749px;top:98.0px;width:1px;background:#8a9199"></div>
<div class="a mm" style="left:1750px;top:98.0px;width:7px;background:#73d0ff"></div>
<div class="a mm" style="left:1757px;top:98.0px;width:1px;background:#8a9199"></div>
<div class="a mm" style="left:1758px;top:98.0px;width:7px;background:#73d0ff"></div>
<div class="a mm" style="left:1766px;top:98.0px;width:6px;background:#ffad66"></div>
<div class="a mm" style="left:1773px;top:98.0px;width:20px;background:#73d0ff"></div>
<div class="a mm" style="left:1735px;top:100.0px;width:4px;background:#ffad66"></div>
<div class="a mm" style="left:1740px;top:100.0px;width:4px;background:#73d0ff"></div>
<div class="a mm" style="left:1744px;top:100.0px;width:1px;background:#8a9199"></div>
<div class="a mm" style="left:1745px;top:100.0px;width:7px;background:#73d0ff"></div>
<div class="a mm" style="left:1752px;top:100.0px;width:1px;background:#8a9199"></div>
<div class="a mm" style="left:1753px;top:100.0px;width:20px;background:#73d0ff"></div>
<div class="a mm" style="left:1773px;top:100.0px;width:1px;background:#8a9199"></div>
<div class="a mm" style="left:1774px;top:100.0px;width:10px;background:#73d0ff"></div>
<div class="a mm" style="left:1784px;top:100.0px;width:1px;background:#8a9199"></div>
<div class="a mm" style="left:1785px;top:100.0px;width:6px;background:#73d0ff"></div>
<div class="a mm" style="left:1792px;top:100.0px;width:6px;background:#ffad66"></div>
<div class="a mm" style="left:1799px;top:100.0px;width:1px;background:#ffd700"></div>
<div class="a mm" style="left:1739px;top:102.0px;width:15px;background:#73d0ff"></div>
<div class="a mm" style="left:1754px;top:102.0px;width:1px;background:#8a9199"></div>
<div class="a mm" style="left:1739px;top:104.0px;width:29px;background:#73d0ff"></div>
<div class="a mm" style="left:1768px;top:104.0px;width:1px;background:#8a9199"></div>
<div class="a mm" style="left:1739px;top:106.0px;width:21px;background:#5a9cc0"></div>
<div class="a mm" style="left:1760px;top:106.0px;width:1px;background:#8a9199"></div>
<div class="a mm" style="left:1739px;top:108.0px;width:32px;background:#cccac2"></div>
<div class="a mm" style="left:1771px;top:108.0px;width:1px;background:#8a9199"></div>
<div class="a mm" style="left:1739px;top:110.0px;width:21px;background:#5a9cc0"></div>
<div class="a mm" style="left:1760px;top:110.0px;width:1px;background:#8a9199"></div>
<div class="a mm" style="left:1739px;top:112.0px;width:32px;background:#cccac2"></div>
<div class="a mm" style="left:1771px;top:112.0px;width:1px;background:#8a9199"></div>
<div class="a mm" style="left:1735px;top:114.0px;width:1px;background:#ffd700"></div>
<div class="a mm" style="left:1735px;top:118.0px;width:1px;background:#6e7c8f"></div>
<div class="a mm" style="left:1737px;top:118.0px;width:6px;background:#6e7c8f"></div>
<div class="a mm" style="left:1744px;top:118.0px;width:4px;background:#6e7c8f"></div>
<div class="a mm" style="left:1749px;top:118.0px;width:8px;background:#6e7c8f"></div>
<div class="a mm" style="left:1735px;top:120.0px;width:4px;background:#ffad66"></div>
<div class="a mm" style="left:1740px;top:120.0px;width:8px;background:#73d0ff"></div>
<div class="a mm" style="left:1748px;top:120.0px;width:1px;background:#8a9199"></div>
<div class="a mm" style="left:1749px;top:120.0px;width:7px;background:#73d0ff"></div>
<div class="a mm" style="left:1756px;top:120.0px;width:1px;background:#8a9199"></div>
<div class="a mm" style="left:1757px;top:120.0px;width:8px;background:#73d0ff"></div>
<div class="a mm" style="left:1765px;top:120.0px;width:1px;background:#8a9199"></div>
<div class="a mm" style="left:1766px;top:120.0px;width:7px;background:#73d0ff"></div>
<div class="a mm" style="left:1774px;top:120.0px;width:6px;background:#ffad66"></div>
<div class="a mm" style="left:1781px;top:120.0px;width:21px;background:#73d0ff"></div>
<div class="a mm" style="left:1735px;top:124.0px;width:6px;background:#cccac2"></div>
<div class="a mm" style="left:1742px;top:124.0px;width:1px;background:#f29e74"></div>
<div class="a mm" style="left:1744px;top:124.0px;width:9px;background:#73d0ff"></div>
<div class="a mm" style="left:1753px;top:124.0px;width:2px;background:#ffd700"></div>
<div class="a mm" style="left:1735px;top:126.0px;width:9px;background:#cccac2"></div>
<div class="a mm" style="left:1745px;top:126.0px;width:1px;background:#f29e74"></div>
<div class="a mm" style="left:1747px;top:126.0px;width:10px;background:#d5ff80"></div>
<div class="a mm" style="left:1758px;top:126.0px;width:10px;background:#d5ff80"></div>
<div class="a mm" style="left:1735px;top:132.0px;width:1px;background:#ffd173"></div>
<div class="a mm" style="left:1736px;top:132.0px;width:6px;background:#cccac2"></div>
<div class="a mm" style="left:1742px;top:132.0px;width:1px;background:#8a9199"></div>
<div class="a mm" style="left:1743px;top:132.0px;width:3px;background:#ffd173"></div>
<div class="a mm" style="left:1746px;top:132.0px;width:1px;background:#ffd700"></div>
<div class="a mm" style="left:1739px;top:134.0px;width:13px;background:#d5ff80"></div>
<div class="a mm" style="left:1752px;top:134.0px;width:1px;background:#8a9199"></div>
<div class="a mm" style="left:1739px;top:136.0px;width:4px;background:#dfbfff"></div>
<div class="a mm" style="left:1743px;top:136.0px;width:1px;background:#f29e74"></div>
<div class="a mm" style="left:1744px;top:136.0px;width:1px;background:#da70d6"></div>
<div class="a mm" style="left:1745px;top:136.0px;width:9px;background:#cccac2"></div>
<div class="a mm" style="left:1754px;top:136.0px;width:1px;background:#da70d6"></div>
<div class="a mm" style="left:1755px;top:136.0px;width:1px;background:#8a9199"></div>
<div class="a mm" style="left:1739px;top:138.0px;width:14px;background:#dfbfff"></div>
<div class="a mm" style="left:1753px;top:138.0px;width:1px;background:#f29e74"></div>
<div class="a mm" style="left:1754px;top:138.0px;width:20px;background:#73d0ff"></div>
<div class="a mm" style="left:1774px;top:138.0px;width:1px;background:#da70d6"></div>
<div class="a mm" style="left:1743px;top:140.0px;width:4px;background:#73d0ff"></div>
<div class="a mm" style="left:1747px;top:140.0px;width:1px;background:#179fff"></div>
<div class="a mm" style="left:1748px;top:140.0px;width:15px;background:#73d0ff"></div>
<div class="a mm" style="left:1763px;top:140.0px;width:1px;background:#179fff"></div>
<div class="a mm" style="left:1764px;top:140.0px;width:1px;background:#8a9199"></div>
<div class="a mm" style="left:1766px;top:140.0px;width:29px;background:#73d0ff"></div>
<div class="a mm" style="left:1739px;top:142.0px;width:1px;background:#da70d6"></div>
<div class="a mm" style="left:1740px;top:142.0px;width:1px;background:#8a9199"></div>
<div class="a mm" style="left:1735px;top:144.0px;width:1px;background:#ffd700"></div>
<div class="a mm" style="left:1735px;top:146.0px;width:5px;background:#ffad66"></div>
<div class="a mm" style="left:1741px;top:146.0px;width:3px;background:#ffad66"></div>
<div class="a mm" style="left:1745px;top:146.0px;width:21px;background:#ffd173"></div>
<div class="a mm" style="left:1766px;top:146.0px;width:1px;background:#ffd700"></div>
<div class="a mm" style="left:1739px;top:148.0px;width:3px;background:#dfbfff"></div>
<div class="a mm" style="left:1742px;top:148.0px;width:1px;background:#8a9199"></div>
<div class="a mm" style="left:1744px;top:148.0px;width:7px;background:#73d0ff"></div>
<div class="a mm" style="left:1751px;top:148.0px;width:1px;background:#8a9199"></div>
<div class="a mm" style="left:1739px;top:150.0px;width:3px;background:#dfbfff"></div>
<div class="a mm" style="left:1742px;top:150.0px;width:1px;background:#8a9199"></div>
<div class="a mm" style="left:1744px;top:150.0px;width:8px;background:#73d0ff"></div>
<div class="a mm" style="left:1752px;top:150.0px;width:1px;background:#8a9199"></div>
<div class="a mm" style="left:1739px;top:152.0px;width:5px;background:#9d8fb5"></div>
<div class="a mm" style="left:1744px;top:152.0px;width:1px;background:#8a9199"></div>
<div class="a mm" style="left:1746px;top:152.0px;width:9px;background:#73d0ff"></div>
<div class="a mm" style="left:1755px;top:152.0px;width:1px;background:#da70d6"></div>
<div class="a mm" style="left:1756px;top:152.0px;width:3px;background:#73d0ff"></div>
<div class="a mm" style="left:1759px;top:152.0px;width:1px;background:#8a9199"></div>
<div class="a mm" style="left:1761px;top:152.0px;width:5px;background:#ffd173"></div>
<div class="a mm" style="left:1766px;top:152.0px;width:1px;background:#179fff"></div>
<div class="a mm" style="left:1767px;top:152.0px;width:8px;background:#dfbfff"></div>
<div class="a mm" style="left:1775px;top:152.0px;width:1px;background:#f29e74"></div>
<div class="a mm" style="left:1776px;top:152.0px;width:1px;background:#ffd700"></div>
<div class="a mm" style="left:1777px;top:152.0px;width:4px;background:#d5ff80"></div>
<div class="a mm" style="left:1781px;top:152.0px;width:1px;background:#ffd700"></div>
<div class="a mm" style="left:1782px;top:152.0px;width:1px;background:#179fff"></div>
<div class="a mm" style="left:1783px;top:152.0px;width:1px;background:#da70d6"></div>
<div class="a mm" style="left:1785px;top:152.0px;width:1px;background:#f29e74"></div>
<div class="a mm" style="left:1787px;top:152.0px;width:2px;background:#d5ff80"></div>
<div class="a mm" style="left:1789px;top:152.0px;width:1px;background:#8a9199"></div>
<div class="a mm" style="left:1739px;top:154.0px;width:8px;background:#9d8fb5"></div>
<div class="a mm" style="left:1747px;top:154.0px;width:1px;background:#8a9199"></div>
<div class="a mm" style="left:1749px;top:154.0px;width:9px;background:#73d0ff"></div>
<div class="a mm" style="left:1758px;top:154.0px;width:1px;background:#da70d6"></div>
<div class="a mm" style="left:1759px;top:154.0px;width:3px;background:#73d0ff"></div>
<div class="a mm" style="left:1762px;top:154.0px;width:1px;background:#8a9199"></div>
<div class="a mm" style="left:1764px;top:154.0px;width:5px;background:#ffd173"></div>
<div class="a mm" style="left:1769px;top:154.0px;width:1px;background:#179fff"></div>
<div class="a mm" style="left:1770px;top:154.0px;width:8px;background:#dfbfff"></div>
<div class="a mm" style="left:1778px;top:154.0px;width:1px;background:#f29e74"></div>
<div class="a mm" style="left:1779px;top:154.0px;width:1px;background:#ffd700"></div>
<div class="a mm" style="left:1780px;top:154.0px;width:15px;background:#d5ff80"></div>
<div class="a mm" style="left:1795px;top:154.0px;width:1px;background:#ffd700"></div>
<div class="a mm" style="left:1796px;top:154.0px;width:1px;background:#179fff"></div>
<div class="a mm" style="left:1797px;top:154.0px;width:1px;background:#da70d6"></div>
<div class="a mm" style="left:1799px;top:154.0px;width:1px;background:#f29e74"></div>
<div class="a mm" style="left:1801px;top:154.0px;width:2px;background:#d5ff80"></div>
<div class="a mm" style="left:1803px;top:154.0px;width:1px;background:#8a9199"></div>
<div class="a mm" style="left:1735px;top:156.0px;width:1px;background:#ffd700"></div>
<div class="a mm" style="left:1736px;top:156.0px;width:1px;background:#8a9199"></div>
<div class="a mm" style="left:1739px;top:158.0px;width:3px;background:#cccac2"></div>
<div class="a mm" style="left:1743px;top:158.0px;width:1px;background:#f29e74"></div>
<div class="a mm" style="left:1745px;top:158.0px;width:21px;background:#73d0ff"></div>
<div class="a mm" style="left:1766px;top:158.0px;width:1px;background:#ffd700"></div>
<div class="a mm" style="left:1767px;top:158.0px;width:3px;background:#dfbfff"></div>
<div class="a mm" style="left:1770px;top:158.0px;width:1px;background:#8a9199"></div>
<div class="a mm" style="left:1772px;top:158.0px;width:3px;background:#dfbfff"></div>
<div class="a mm" style="left:1775px;top:158.0px;width:1px;background:#ffd700"></div>
<div class="a mm" style="left:1739px;top:160.0px;width:6px;background:#ffad66"></div>
<div class="a mm" style="left:1746px;top:160.0px;width:5px;background:#ffad66"></div>
<div class="a mm" style="left:1752px;top:160.0px;width:22px;background:#cccac2"></div>
<div class="a mm" style="left:1774px;top:160.0px;width:1px;background:#8a9199"></div>
<div class="a mm" style="left:1775px;top:160.0px;width:3px;background:#ffd173"></div>
<div class="a mm" style="left:1778px;top:160.0px;width:1px;background:#ffd700"></div>
<div class="a mm" style="left:1779px;top:160.0px;width:3px;background:#cccac2"></div>
<div class="a mm" style="left:1782px;top:160.0px;width:1px;background:#ffd700"></div>
<div class="a mm" style="left:1735px;top:166.0px;width:1px;background:#ffd173"></div>
<div class="a mm" style="left:1736px;top:166.0px;width:6px;background:#cccac2"></div>
<div class="a mm" style="left:1742px;top:166.0px;width:1px;background:#8a9199"></div>
<div class="a mm" style="left:1743px;top:166.0px;width:3px;background:#ffd173"></div>
<div class="a mm" style="left:1746px;top:166.0px;width:1px;background:#ffd700"></div>
<div class="a mm" style="left:1739px;top:168.0px;width:18px;background:#d5ff80"></div>
<div class="a mm" style="left:1757px;top:168.0px;width:1px;background:#8a9199"></div>
<div class="a mm" style="left:1739px;top:170.0px;width:4px;background:#dfbfff"></div>
<div class="a mm" style="left:1743px;top:170.0px;width:1px;background:#f29e74"></div>
<div class="a mm" style="left:1744px;top:170.0px;width:1px;background:#da70d6"></div>
<div class="a mm" style="left:1745px;top:170.0px;width:9px;background:#cccac2"></div>
<div class="a mm" style="left:1754px;top:170.0px;width:1px;background:#da70d6"></div>
<div class="a mm" style="left:1755px;top:170.0px;width:1px;background:#8a9199"></div>
<div class="a mm" style="left:1739px;top:172.0px;width:14px;background:#dfbfff"></div>
<div class="a mm" style="left:1753px;top:172.0px;width:1px;background:#f29e74"></div>
<div class="a mm" style="left:1754px;top:172.0px;width:20px;background:#73d0ff"></div>
<div class="a mm" style="left:1774px;top:172.0px;width:1px;background:#da70d6"></div>
<div class="a mm" style="left:1775px;top:172.0px;width:15px;background:#73d0ff"></div>
<div class="a mm" style="left:1790px;top:172.0px;width:1px;background:#8a9199"></div>
<div class="a mm" style="left:1792px;top:172.0px;width:4px;background:#73d0ff"></div>
<div class="a mm" style="left:1796px;top:172.0px;width:1px;background:#da70d6"></div>
<div class="a mm" style="left:1797px;top:172.0px;width:1px;background:#8a9199"></div>
<div class="a mm" style="left:1735px;top:174.0px;width:1px;background:#ffd700"></div>
<div class="a mm" style="left:1735px;top:176.0px;width:5px;background:#ffad66"></div>
<div class="a mm" style="left:1741px;top:176.0px;width:3px;background:#ffad66"></div>
<div class="a mm" style="left:1745px;top:176.0px;width:20px;background:#ffd173"></div>
<div class="a mm" style="left:1765px;top:176.0px;width:1px;background:#ffd700"></div>
<div class="a mm" style="left:1739px;top:178.0px;width:3px;background:#dfbfff"></div>
<div class="a mm" style="left:1742px;top:178.0px;width:1px;background:#8a9199"></div>
<div class="a mm" style="left:1744px;top:178.0px;width:7px;background:#73d0ff"></div>
<div class="a mm" style="left:1751px;top:178.0px;width:1px;background:#8a9199"></div>
<div class="a mm" style="left:1739px;top:180.0px;width:3px;background:#dfbfff"></div>
<div class="a mm" style="left:1742px;top:180.0px;width:1px;background:#8a9199"></div>
<div class="a mm" style="left:1744px;top:180.0px;width:8px;background:#73d0ff"></div>
<div class="a mm" style="left:1752px;top:180.0px;width:1px;background:#8a9199"></div>
<div class="a mm" style="left:1739px;top:182.0px;width:2px;background:#9d8fb5"></div>
<div class="a mm" style="left:1741px;top:182.0px;width:1px;background:#8a9199"></div>
<div class="a mm" style="left:1743px;top:182.0px;width:9px;background:#73d0ff"></div>
<div class="a mm" style="left:1752px;top:182.0px;width:1px;background:#da70d6"></div>
<div class="a mm" style="left:1753px;top:182.0px;width:3px;background:#73d0ff"></div>
<div class="a mm" style="left:1756px;top:182.0px;width:1px;background:#8a9199"></div>
<div class="a mm" style="left:1758px;top:182.0px;width:4px;background:#ffd173"></div>
<div class="a mm" style="left:1762px;top:182.0px;width:1px;background:#179fff"></div>
<div class="a mm" style="left:1763px;top:182.0px;width:8px;background:#dfbfff"></div>
<div class="a mm" style="left:1771px;top:182.0px;width:1px;background:#f29e74"></div>
<div class="a mm" style="left:1772px;top:182.0px;width:1px;background:#ffd700"></div>
<div class="a mm" style="left:1773px;top:182.0px;width:14px;background:#d5ff80"></div>
<div class="a mm" style="left:1787px;top:182.0px;width:1px;background:#ffd700"></div>
<div class="a mm" style="left:1788px;top:182.0px;width:1px;background:#179fff"></div>
<div class="a mm" style="left:1789px;top:182.0px;width:1px;background:#da70d6"></div>
<div class="a mm" style="left:1790px;top:182.0px;width:1px;background:#8a9199"></div>
<div class="a mm" style="left:1735px;top:184.0px;width:1px;background:#ffd700"></div>
<div class="a mm" style="left:1736px;top:184.0px;width:1px;background:#8a9199"></div>
<div class="a mm" style="left:1739px;top:186.0px;width:3px;background:#cccac2"></div>
<div class="a mm" style="left:1743px;top:186.0px;width:1px;background:#f29e74"></div>
<div class="a mm" style="left:1745px;top:186.0px;width:21px;background:#73d0ff"></div>
<div class="a mm" style="left:1766px;top:186.0px;width:1px;background:#ffd700"></div>
<div class="a mm" style="left:1767px;top:186.0px;width:3px;background:#dfbfff"></div>
<div class="a mm" style="left:1770px;top:186.0px;width:1px;background:#8a9199"></div>
<div class="a mm" style="left:1772px;top:186.0px;width:3px;background:#dfbfff"></div>
<div class="a mm" style="left:1775px;top:186.0px;width:1px;background:#ffd700"></div>
<div class="a mm" style="left:1739px;top:188.0px;width:6px;background:#ffad66"></div>
<div class="a mm" style="left:1746px;top:188.0px;width:5px;background:#ffad66"></div>
<div class="a mm" style="left:1752px;top:188.0px;width:21px;background:#cccac2"></div>
<div class="a mm" style="left:1773px;top:188.0px;width:1px;background:#8a9199"></div>
<div class="a mm" style="left:1774px;top:188.0px;width:3px;background:#ffd173"></div>
<div class="a mm" style="left:1777px;top:188.0px;width:1px;background:#ffd700"></div>
<div class="a mm" style="left:1778px;top:188.0px;width:3px;background:#cccac2"></div>
<div class="a mm" style="left:1781px;top:188.0px;width:1px;background:#ffd700"></div>
<div class="a mm" style="left:1735px;top:194.0px;width:1px;background:#ffd173"></div>
<div class="a mm" style="left:1736px;top:194.0px;width:6px;background:#cccac2"></div>
<div class="a mm" style="left:1742px;top:194.0px;width:1px;background:#8a9199"></div>
<div class="a mm" style="left:1743px;top:194.0px;width:4px;background:#ffd173"></div>
<div class="a mm" style="left:1747px;top:194.0px;width:1px;background:#ffd700"></div>
<div class="a mm" style="left:1739px;top:196.0px;width:13px;background:#d5ff80"></div>
<div class="a mm" style="left:1752px;top:196.0px;width:1px;background:#8a9199"></div>
<div class="a mm" style="left:1739px;top:198.0px;width:4px;background:#dfbfff"></div>
<div class="a mm" style="left:1743px;top:198.0px;width:1px;background:#f29e74"></div>
<div class="a mm" style="left:1744px;top:198.0px;width:1px;background:#da70d6"></div>
<div class="a mm" style="left:1745px;top:198.0px;width:9px;background:#cccac2"></div>
<div class="a mm" style="left:1754px;top:198.0px;width:1px;background:#da70d6"></div>
<div class="a mm" style="left:1755px;top:198.0px;width:1px;background:#8a9199"></div>
<div class="a mm" style="left:1739px;top:200.0px;width:14px;background:#dfbfff"></div>
<div class="a mm" style="left:1753px;top:200.0px;width:1px;background:#f29e74"></div>
<div class="a mm" style="left:1754px;top:200.0px;width:20px;background:#73d0ff"></div>
<div class="a mm" style="left:1774px;top:200.0px;width:1px;background:#da70d6"></div>
<div class="a mm" style="left:1775px;top:200.0px;width:15px;background:#73d0ff"></div>
<div class="a mm" style="left:1790px;top:200.0px;width:1px;background:#8a9199"></div>
<div class="a mm" style="left:1792px;top:200.0px;width:4px;background:#73d0ff"></div>
<div class="a mm" style="left:1796px;top:200.0px;width:1px;background:#da70d6"></div>
<div class="a mm" style="left:1797px;top:200.0px;width:1px;background:#8a9199"></div>
<div class="a mm" style="left:1735px;top:202.0px;width:1px;background:#ffd700"></div>
<div class="a mm" style="left:1735px;top:204.0px;width:5px;background:#ffad66"></div>
<div class="a mm" style="left:1741px;top:204.0px;width:3px;background:#ffad66"></div>
<div class="a mm" style="left:1745px;top:204.0px;width:20px;background:#ffd173"></div>
<div class="a mm" style="left:1765px;top:204.0px;width:1px;background:#ffd700"></div>
<div class="a mm" style="left:1739px;top:206.0px;width:3px;background:#dfbfff"></div>
<div class="a mm" style="left:1742px;top:206.0px;width:1px;background:#8a9199"></div>
<div class="a mm" style="left:1744px;top:206.0px;width:7px;background:#73d0ff"></div>
<div class="a mm" style="left:1751px;top:206.0px;width:1px;background:#8a9199"></div>
<div class="a mm" style="left:1739px;top:208.0px;width:3px;background:#dfbfff"></div>
<div class="a mm" style="left:1742px;top:208.0px;width:1px;background:#8a9199"></div>
<div class="a mm" style="left:1744px;top:208.0px;width:8px;background:#73d0ff"></div>
<div class="a mm" style="left:1752px;top:208.0px;width:1px;background:#8a9199"></div>
<div class="a mm" style="left:1739px;top:210.0px;width:1px;background:#9d8fb5"></div>
<div class="a mm" style="left:1740px;top:210.0px;width:1px;background:#8a9199"></div>
<div class="a mm" style="left:1742px;top:210.0px;width:9px;background:#73d0ff"></div>
<div class="a mm" style="left:1751px;top:210.0px;width:1px;background:#da70d6"></div>
<div class="a mm" style="left:1752px;top:210.0px;width:4px;background:#73d0ff"></div>
<div class="a mm" style="left:1756px;top:210.0px;width:1px;background:#8a9199"></div>
<div class="a mm" style="left:1758px;top:210.0px;width:4px;background:#ffd173"></div>
<div class="a mm" style="left:1762px;top:210.0px;width:1px;background:#179fff"></div>
<div class="a mm" style="left:1763px;top:210.0px;width:8px;background:#dfbfff"></div>
<div class="a mm" style="left:1771px;top:210.0px;width:1px;background:#f29e74"></div>
<div class="a mm" style="left:1772px;top:210.0px;width:1px;background:#ffd700"></div>
<div class="a mm" style="left:1773px;top:210.0px;width:32px;background:#cccac2"></div>
<div class="a mm" style="left:1805px;top:210.0px;width:1px;background:#ffd700"></div>
<div class="a mm" style="left:1806px;top:210.0px;width:1px;background:#179fff"></div>
<div class="a mm" style="left:1807px;top:210.0px;width:1px;background:#da70d6"></div>
<div class="a mm" style="left:1808px;top:210.0px;width:1px;background:#8a9199"></div>
<div class="a mm" style="left:1735px;top:212.0px;width:1px;background:#ffd700"></div>
<div class="a mm" style="left:1736px;top:212.0px;width:1px;background:#8a9199"></div>
<div class="a mm" style="left:1739px;top:214.0px;width:3px;background:#cccac2"></div>
<div class="a mm" style="left:1743px;top:214.0px;width:1px;background:#f29e74"></div>
<div class="a mm" style="left:1745px;top:214.0px;width:21px;background:#73d0ff"></div>
<div class="a mm" style="left:1766px;top:214.0px;width:1px;background:#ffd700"></div>
<div class="a mm" style="left:1767px;top:214.0px;width:3px;background:#dfbfff"></div>
<div class="a mm" style="left:1770px;top:214.0px;width:1px;background:#8a9199"></div>
<div class="a mm" style="left:1772px;top:214.0px;width:3px;background:#dfbfff"></div>
<div class="a mm" style="left:1775px;top:214.0px;width:1px;background:#ffd700"></div>
<div class="a mm" style="left:1739px;top:216.0px;width:6px;background:#ffad66"></div>
<div class="a mm" style="left:1746px;top:216.0px;width:5px;background:#ffad66"></div>
<div class="a mm" style="left:1752px;top:216.0px;width:21px;background:#cccac2"></div>
<div class="a mm" style="left:1773px;top:216.0px;width:1px;background:#8a9199"></div>
<div class="a mm" style="left:1774px;top:216.0px;width:3px;background:#ffd173"></div>
<div class="a mm" style="left:1777px;top:216.0px;width:1px;background:#ffd700"></div>
<div class="a mm" style="left:1778px;top:216.0px;width:3px;background:#cccac2"></div>
<div class="a mm" style="left:1781px;top:216.0px;width:1px;background:#ffd700"></div>
<div class="a mm" style="left:1735px;top:222.0px;width:1px;background:#ffd173"></div>
<div class="a mm" style="left:1736px;top:222.0px;width:6px;background:#cccac2"></div>
<div class="a mm" style="left:1742px;top:222.0px;width:1px;background:#8a9199"></div>
<div class="a mm" style="left:1743px;top:222.0px;width:5px;background:#ffd173"></div>
<div class="a mm" style="left:1748px;top:222.0px;width:1px;background:#ffd700"></div>
<div class="a mm" style="left:1739px;top:224.0px;width:18px;background:#d5ff80"></div>
<div class="a mm" style="left:1757px;top:224.0px;width:1px;background:#8a9199"></div>
<div class="a mm" style="left:1739px;top:226.0px;width:4px;background:#dfbfff"></div>
<div class="a mm" style="left:1743px;top:226.0px;width:1px;background:#f29e74"></div>
<div class="a mm" style="left:1744px;top:226.0px;width:1px;background:#da70d6"></div>
<div class="a mm" style="left:1745px;top:226.0px;width:9px;background:#cccac2"></div>
<div class="a mm" style="left:1754px;top:226.0px;width:1px;background:#da70d6"></div>
<div class="a mm" style="left:1755px;top:226.0px;width:1px;background:#8a9199"></div>
<div class="a mm" style="left:1739px;top:228.0px;width:14px;background:#dfbfff"></div>
<div class="a mm" style="left:1753px;top:228.0px;width:1px;background:#f29e74"></div>
<div class="a mm" style="left:1754px;top:228.0px;width:20px;background:#73d0ff"></div>
<div class="a mm" style="left:1774px;top:228.0px;width:1px;background:#da70d6"></div>
<div class="a mm" style="left:1775px;top:228.0px;width:15px;background:#73d0ff"></div>
<div class="a mm" style="left:1790px;top:228.0px;width:1px;background:#8a9199"></div>
<div class="a mm" style="left:1792px;top:228.0px;width:4px;background:#73d0ff"></div>
<div class="a mm" style="left:1796px;top:228.0px;width:1px;background:#da70d6"></div>
<div class="a mm" style="left:1797px;top:228.0px;width:1px;background:#8a9199"></div>
<div class="a mm" style="left:1735px;top:230.0px;width:1px;background:#ffd700"></div>
<div class="a mm" style="left:1735px;top:232.0px;width:5px;background:#ffad66"></div>
<div class="a mm" style="left:1741px;top:232.0px;width:3px;background:#ffad66"></div>
<div class="a mm" style="left:1745px;top:232.0px;width:23px;background:#ffd173"></div>
<div class="a mm" style="left:1768px;top:232.0px;width:1px;background:#ffd700"></div>
<div class="a mm" style="left:1739px;top:234.0px;width:3px;background:#dfbfff"></div>
<div class="a mm" style="left:1742px;top:234.0px;width:1px;background:#8a9199"></div>
<div class="a mm" style="left:1744px;top:234.0px;width:7px;background:#73d0ff"></div>
<div class="a mm" style="left:1751px;top:234.0px;width:1px;background:#8a9199"></div>
<div class="a mm" style="left:1739px;top:236.0px;width:3px;background:#dfbfff"></div>
<div class="a mm" style="left:1742px;top:236.0px;width:1px;background:#8a9199"></div>
<div class="a mm" style="left:1744px;top:236.0px;width:8px;background:#73d0ff"></div>
<div class="a mm" style="left:1752px;top:236.0px;width:1px;background:#8a9199"></div>
<div class="a mm" style="left:1739px;top:238.0px;width:2px;background:#9d8fb5"></div>
<div class="a mm" style="left:1741px;top:238.0px;width:1px;background:#8a9199"></div>
<div class="a mm" style="left:1743px;top:238.0px;width:9px;background:#73d0ff"></div>
<div class="a mm" style="left:1752px;top:238.0px;width:1px;background:#da70d6"></div>
<div class="a mm" style="left:1753px;top:238.0px;width:3px;background:#73d0ff"></div>
<div class="a mm" style="left:1756px;top:238.0px;width:1px;background:#8a9199"></div>
<div class="a mm" style="left:1758px;top:238.0px;width:4px;background:#ffd173"></div>
<div class="a mm" style="left:1762px;top:238.0px;width:1px;background:#179fff"></div>
<div class="a mm" style="left:1763px;top:238.0px;width:8px;background:#dfbfff"></div>
<div class="a mm" style="left:1771px;top:238.0px;width:1px;background:#f29e74"></div>
<div class="a mm" style="left:1772px;top:238.0px;width:1px;background:#ffd700"></div>
<div class="a mm" style="left:1773px;top:238.0px;width:14px;background:#d5ff80"></div>
<div class="a mm" style="left:1787px;top:238.0px;width:1px;background:#ffd700"></div>
<div class="a mm" style="left:1788px;top:238.0px;width:1px;background:#179fff"></div>
<div class="a mm" style="left:1789px;top:238.0px;width:1px;background:#da70d6"></div>
<div class="a mm" style="left:1790px;top:238.0px;width:1px;background:#8a9199"></div>
<div class="a mm" style="left:1739px;top:240.0px;width:1px;background:#9d8fb5"></div>
<div class="a mm" style="left:1740px;top:240.0px;width:1px;background:#8a9199"></div>
<div class="a mm" style="left:1742px;top:240.0px;width:9px;background:#73d0ff"></div>
<div class="a mm" style="left:1751px;top:240.0px;width:1px;background:#da70d6"></div>
<div class="a mm" style="left:1752px;top:240.0px;width:4px;background:#73d0ff"></div>
<div class="a mm" style="left:1756px;top:240.0px;width:1px;background:#8a9199"></div>
<div class="a mm" style="left:1758px;top:240.0px;width:4px;background:#ffd173"></div>
<div class="a mm" style="left:1762px;top:240.0px;width:1px;background:#179fff"></div>
<div class="a mm" style="left:1763px;top:240.0px;width:8px;background:#dfbfff"></div>
<div class="a mm" style="left:1771px;top:240.0px;width:1px;background:#f29e74"></div>
<div class="a mm" style="left:1772px;top:240.0px;width:1px;background:#ffd700"></div>
<div class="a mm" style="left:1773px;top:240.0px;width:32px;background:#cccac2"></div>
<div class="a mm" style="left:1805px;top:240.0px;width:1px;background:#ffd700"></div>
<div class="a mm" style="left:1806px;top:240.0px;width:1px;background:#179fff"></div>
<div class="a mm" style="left:1807px;top:240.0px;width:1px;background:#da70d6"></div>
<div class="a mm" style="left:1808px;top:240.0px;width:1px;background:#8a9199"></div>
<div class="a mm" style="left:1735px;top:242.0px;width:1px;background:#ffd700"></div>
<div class="a mm" style="left:1736px;top:242.0px;width:1px;background:#8a9199"></div>
<div class="a mm" style="left:1739px;top:244.0px;width:3px;background:#cccac2"></div>
<div class="a mm" style="left:1743px;top:244.0px;width:1px;background:#f29e74"></div>
<div class="a mm" style="left:1745px;top:244.0px;width:21px;background:#73d0ff"></div>
<div class="a mm" style="left:1766px;top:244.0px;width:1px;background:#ffd700"></div>
<div class="a mm" style="left:1767px;top:244.0px;width:3px;background:#dfbfff"></div>
<div class="a mm" style="left:1770px;top:244.0px;width:1px;background:#8a9199"></div>
<div class="a mm" style="left:1772px;top:244.0px;width:3px;background:#dfbfff"></div>
<div class="a mm" style="left:1775px;top:244.0px;width:1px;background:#ffd700"></div>
<div class="a mm" style="left:1739px;top:246.0px;width:6px;background:#ffad66"></div>
<div class="a mm" style="left:1746px;top:246.0px;width:5px;background:#ffad66"></div>
<div class="a mm" style="left:1752px;top:246.0px;width:24px;background:#cccac2"></div>
<div class="a mm" style="left:1776px;top:246.0px;width:1px;background:#8a9199"></div>
<div class="a mm" style="left:1777px;top:246.0px;width:3px;background:#ffd173"></div>
<div class="a mm" style="left:1780px;top:246.0px;width:1px;background:#ffd700"></div>
<div class="a mm" style="left:1781px;top:246.0px;width:3px;background:#cccac2"></div>
<div class="a mm" style="left:1784px;top:246.0px;width:1px;background:#ffd700"></div>
<div class="a mm" style="left:1735px;top:252.0px;width:1px;background:#ffd173"></div>
<div class="a mm" style="left:1736px;top:252.0px;width:6px;background:#cccac2"></div>
<div class="a mm" style="left:1742px;top:252.0px;width:1px;background:#8a9199"></div>
<div class="a mm" style="left:1743px;top:252.0px;width:6px;background:#ffd173"></div>
<div class="a mm" style="left:1749px;top:252.0px;width:1px;background:#ffd700"></div>
<div class="a mm" style="left:1739px;top:254.0px;width:18px;background:#d5ff80"></div>
<div class="a mm" style="left:1757px;top:254.0px;width:1px;background:#8a9199"></div>
<div class="a mm" style="left:1739px;top:256.0px;width:4px;background:#dfbfff"></div>
<div class="a mm" style="left:1743px;top:256.0px;width:1px;background:#f29e74"></div>
<div class="a mm" style="left:1744px;top:256.0px;width:1px;background:#da70d6"></div>
<div class="a mm" style="left:1745px;top:256.0px;width:9px;background:#cccac2"></div>
<div class="a mm" style="left:1754px;top:256.0px;width:1px;background:#da70d6"></div>
<div class="a mm" style="left:1755px;top:256.0px;width:1px;background:#8a9199"></div>
<div class="a mm" style="left:1739px;top:258.0px;width:14px;background:#dfbfff"></div>
<div class="a mm" style="left:1753px;top:258.0px;width:1px;background:#f29e74"></div>
<div class="a mm" style="left:1754px;top:258.0px;width:20px;background:#73d0ff"></div>
<div class="a mm" style="left:1774px;top:258.0px;width:1px;background:#da70d6"></div>
<div class="a mm" style="left:1775px;top:258.0px;width:4px;background:#73d0ff"></div>
<div class="a mm" style="left:1779px;top:258.0px;width:1px;background:#8a9199"></div>
<div class="a mm" style="left:1781px;top:258.0px;width:4px;background:#73d0ff"></div>
<div class="a mm" style="left:1785px;top:258.0px;width:1px;background:#da70d6"></div>
<div class="a mm" style="left:1786px;top:258.0px;width:1px;background:#8a9199"></div>
<div class="a mm" style="left:1735px;top:260.0px;width:1px;background:#ffd700"></div>
<div class="a mm" style="left:1735px;top:262.0px;width:5px;background:#ffad66"></div>
<div class="a mm" style="left:1741px;top:262.0px;width:3px;background:#ffad66"></div>
<div class="a mm" style="left:1745px;top:262.0px;width:23px;background:#ffd173"></div>
<div class="a mm" style="left:1768px;top:262.0px;width:1px;background:#ffd700"></div>
<div class="a mm" style="left:1739px;top:264.0px;width:3px;background:#dfbfff"></div>
<div class="a mm" style="left:1742px;top:264.0px;width:1px;background:#8a9199"></div>
<div class="a mm" style="left:1744px;top:264.0px;width:7px;background:#73d0ff"></div>
<div class="a mm" style="left:1751px;top:264.0px;width:1px;background:#8a9199"></div>
<div class="a mm" style="left:1739px;top:266.0px;width:3px;background:#dfbfff"></div>
<div class="a mm" style="left:1742px;top:266.0px;width:1px;background:#8a9199"></div>
<div class="a mm" style="left:1744px;top:266.0px;width:8px;background:#73d0ff"></div>
<div class="a mm" style="left:1752px;top:266.0px;width:1px;background:#8a9199"></div>
<div class="a mm" style="left:1739px;top:268.0px;width:2px;background:#9d8fb5"></div>
<div class="a mm" style="left:1741px;top:268.0px;width:1px;background:#8a9199"></div>
<div class="a mm" style="left:1743px;top:268.0px;width:9px;background:#73d0ff"></div>
<div class="a mm" style="left:1752px;top:268.0px;width:1px;background:#da70d6"></div>
<div class="a mm" style="left:1753px;top:268.0px;width:3px;background:#73d0ff"></div>
<div class="a mm" style="left:1756px;top:268.0px;width:1px;background:#8a9199"></div>
<div class="a mm" style="left:1758px;top:268.0px;width:4px;background:#ffd173"></div>
<div class="a mm" style="left:1762px;top:268.0px;width:1px;background:#179fff"></div>
<div class="a mm" style="left:1763px;top:268.0px;width:8px;background:#dfbfff"></div>
<div class="a mm" style="left:1771px;top:268.0px;width:1px;background:#f29e74"></div>
<div class="a mm" style="left:1772px;top:268.0px;width:1px;background:#ffd700"></div>
<div class="a mm" style="left:1773px;top:268.0px;width:14px;background:#d5ff80"></div>
<div class="a mm" style="left:1787px;top:268.0px;width:1px;background:#ffd700"></div>
<div class="a mm" style="left:1788px;top:268.0px;width:1px;background:#179fff"></div>
<div class="a mm" style="left:1789px;top:268.0px;width:1px;background:#da70d6"></div>
<div class="a mm" style="left:1790px;top:268.0px;width:1px;background:#8a9199"></div>
<div class="a mm" style="left:1735px;top:270.0px;width:1px;background:#ffd700"></div>
<div class="a mm" style="left:1736px;top:270.0px;width:1px;background:#8a9199"></div>
<div class="a mm" style="left:1739px;top:272.0px;width:3px;background:#cccac2"></div>
<div class="a mm" style="left:1743px;top:272.0px;width:1px;background:#f29e74"></div>
<div class="a mm" style="left:1745px;top:272.0px;width:21px;background:#73d0ff"></div>
<div class="a mm" style="left:1766px;top:272.0px;width:1px;background:#ffd700"></div>
<div class="a mm" style="left:1767px;top:272.0px;width:3px;background:#dfbfff"></div>
<div class="a mm" style="left:1770px;top:272.0px;width:1px;background:#8a9199"></div>
<div class="a mm" style="left:1772px;top:272.0px;width:3px;background:#dfbfff"></div>
<div class="a mm" style="left:1775px;top:272.0px;width:1px;background:#ffd700"></div>
<div class="a mm" style="left:1739px;top:274.0px;width:6px;background:#ffad66"></div>
<div class="a mm" style="left:1746px;top:274.0px;width:5px;background:#ffad66"></div>
<div class="a mm" style="left:1752px;top:274.0px;width:24px;background:#cccac2"></div>
<div class="a mm" style="left:1776px;top:274.0px;width:1px;background:#8a9199"></div>
<div class="a mm" style="left:1777px;top:274.0px;width:3px;background:#ffd173"></div>
<div class="a mm" style="left:1780px;top:274.0px;width:1px;background:#ffd700"></div>
<div class="a mm" style="left:1781px;top:274.0px;width:3px;background:#cccac2"></div>
<div class="a mm" style="left:1784px;top:274.0px;width:1px;background:#ffd700"></div>
<div class="a" style="left:0;top:0;width:1847px;height:1px;background:#14171e"></div>
<div class="a" style="left:0;top:0;width:1px;height:974px;background:#14171e"></div>
<div class="a" style="left:1846px;top:0;width:1px;height:974px;background:#14171e"></div>
<div class="a" style="left:0;top:973px;width:1847px;height:1px;background:#14171e"></div>
</body></html>
